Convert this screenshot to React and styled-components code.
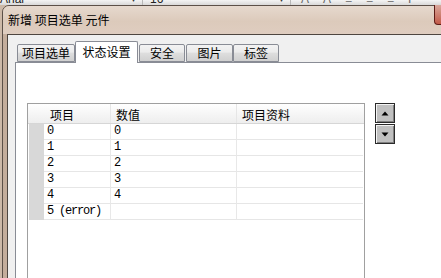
import React from 'react';
import styled, { createGlobalStyle } from 'styled-components';

const Global = createGlobalStyle`
  html, body { margin: 0; padding: 0; overflow: hidden; background: #cdb9a8; }
  body { width: 441px; height: 278px; font-family: "Noto Sans CJK SC", sans-serif; }
  #root { width: 441px; height: 278px; overflow: hidden; }
`;

const Toolbar = styled.div`
  height: 5px;
  flex-shrink: 0;
  overflow: hidden;
  background: linear-gradient(#f4f4f4, #d9d9d9);
  display: flex;
`;

const ToolInner = styled.div`
  display: flex;
  align-items: center;
  height: 12px;
  margin-top: -7px;
  font-family: "Liberation Sans", sans-serif;
  font-size: 12px;
  color: #222;
`;

const Combo = styled.div`
  width: ${p => p.$w}px;
  display: flex;
  align-items: center;
  padding-left: ${p => p.$pl}px;
  border-right: 1px solid #b8b8b8;
  box-sizing: border-box;
  height: 12px;
`;

const ComboText = styled.span`
  flex: 1;
`;

const ComboArrow = styled.span`
  font-size: 7px;
  margin-right: 5px;
  color: #333;
`;

const ToolIcons = styled.div`
  display: flex;
  gap: 14px;
  padding-left: 10px;
  color: #666;
  font-size: 12px;
`;

const Window = styled.div`
  width: 520px;
  height: 400px;
  margin-left: 2px;
  border: 1px solid #5c5048;
  border-radius: 7px 7px 0 0;
  background: linear-gradient(90deg, #c4ad9b, #dac7b9 25%, #d6c1b1 60%, #dcc9bb);
  display: flex;
  flex-direction: column;
`;

const TitleBar = styled.div`
  height: 28px;
  flex-shrink: 0;
  display: flex;
  align-items: flex-start;
  background: linear-gradient(#e6d9ce, #dccabb 55%, #dfcdc0);
  border-radius: 6px 6px 0 0;
`;

const Title = styled.div`
  flex: 0 0 431px;
  padding-left: 5px;
  box-sizing: border-box;
  margin-top: 7px;
  font-size: 12px;
  line-height: 14px;
  color: #000;
  white-space: nowrap;
`;

const CloseBtn = styled.div`
  width: 45px;
  height: 20px;
  margin-top: -1px;
  box-sizing: border-box;
  border: 1px solid #5e1c16;
  border-top: none;
  border-radius: 0 0 4px 4px;
  background: linear-gradient(#d9a89c, #c25a48);
`;

const Client = styled.div`
  flex: 1;
  margin-left: 4px;
  border-left: 1px solid #4e4640;
  border-top: 1px solid #4e4640;
  background: #f0f0f0;
  padding: 6px 0 0 7px;
  display: flex;
  flex-direction: column;
`;

const TabStrip = styled.div`
  height: 21px;
  flex-shrink: 0;
  display: flex;
  align-items: flex-end;
  padding-left: 2px;
`;

const Tab = styled.div`
  position: relative;
  box-sizing: border-box;
  width: ${p => p.$w}px;
  margin-left: ${p => p.$ml || 0}px;
  height: ${p => (p.$active ? 22 : 18)}px;
  margin-bottom: ${p => (p.$active ? -1 : 0)}px;
  z-index: ${p => (p.$active ? 2 : 1)};
  border: 1px solid #898c95;
  border-bottom: ${p => (p.$active ? 'none' : '1px solid #898c95')};
  border-radius: 2px 2px 0 0;
  background: ${p =>
    p.$active
      ? '#ffffff'
      : 'linear-gradient(#f3f3f3, #ebebeb 45%, #dedede 50%, #d0d0d0)'};
  font-size: 12px;
  line-height: 14px;
  color: #000;
  display: flex;
  align-items: center;
  justify-content: center;
  padding-bottom: ${p => (p.$active ? 2 : 0)}px;
`;

const Panel = styled.div`
  flex: 1;
  background: #ffffff;
  border: 1px solid #898c95;
  border-right: none;
  padding: 40px 0 0 11px;
  display: flex;
  align-items: flex-start;
`;

const Grid = styled.div`
  width: 338px;
  height: 240px;
  flex-shrink: 0;
  box-sizing: border-box;
  border: 1px solid #a0a0a0;
  border-bottom: none;
  background: #fff;
  display: flex;
  flex-direction: column;
`;

const HeaderRow = styled.div`
  display: flex;
  height: 20px;
  flex-shrink: 0;
  box-sizing: border-box;
  background: linear-gradient(#ffffff, #f6f6f6 50%, #eeeeee);
  border-bottom: 1px solid #d6d6d6;
`;

const HeadSpacer = styled.div`
  width: 16px;
`;

const HeadCell = styled.div`
  width: ${p => p.$w}px;
  box-sizing: border-box;
  padding: 4px 0 0 ${p => p.$pl}px;
  border-right: ${p => (p.$last ? 'none' : '1px solid #e6e6e6')};
  font-size: 12px;
  line-height: 14px;
  color: #000;
`;

const Row = styled.div`
  display: flex;
  height: 16px;
  flex-shrink: 0;
`;

const RowHead = styled.div`
  width: 15px;
  margin-left: 1px;
  background: #d8d8d8;
`;

const Cell = styled.div`
  width: ${p => p.$w}px;
  box-sizing: border-box;
  padding-left: 3px;
  border-bottom: 1px solid #e6e6e6;
  border-right: ${p => (p.$last ? 'none' : '1px solid #e8e8e8')};
  font-family: "Liberation Mono", monospace;
  font-size: 12px;
  letter-spacing: -1.2px;
  line-height: 15px;
  color: #000;
  white-space: nowrap;
`;

const Buttons = styled.div`
  margin-left: 10px;
  display: flex;
  flex-direction: column;
  gap: 1px;
`;

const ArrowBtn = styled.div`
  width: 20px;
  height: 20px;
  box-sizing: border-box;
  border: 1px solid #2a2a2a;
  background: #c0c0c0;
  box-shadow: inset 1px 1px 0 #f4f4f4, inset -1px -1px 0 #808080;
  display: flex;
  align-items: center;
  justify-content: center;
`;

const rows = [
  ['0', '0'],
  ['1', '1'],
  ['2', '2'],
  ['3', '3'],
  ['4', '4'],
  ['5 (error)', ''],
];

const tabs = [
  { label: '项目选单', w: 58 },
  { label: '状态设置', w: 63, active: true },
  { label: '安全', w: 46, ml: 1 },
  { label: '图片', w: 47, ml: 1 },
  { label: '标签', w: 46 },
];

export default function App() {
  return (
    <>
      <Global />
      <Toolbar>
        <ToolInner>
          <Combo $w={143} $pl={0}>
            <ComboText>Arial</ComboText>
            <ComboArrow>▼</ComboArrow>
          </Combo>
          <Combo $w={148} $pl={7}>
            <ComboText>16</ComboText>
            <ComboArrow>▼</ComboArrow>
          </Combo>
          <ToolIcons>
            <span>A</span>
            <span>A</span>
            <span>≡</span>
            <span>≡</span>
            <span>≡</span>
            <span>I</span>
          </ToolIcons>
        </ToolInner>
      </Toolbar>
      <Window>
        <TitleBar>
          <Title>新增 项目选单 元件</Title>
          <CloseBtn />
        </TitleBar>
        <Client>
          <TabStrip>
            {tabs.map(t => (
              <Tab key={t.label} $w={t.w} $ml={t.ml} $active={t.active}>
                {t.label}
              </Tab>
            ))}
          </TabStrip>
          <Panel>
            <Grid>
              <HeaderRow>
                <HeadSpacer />
                <HeadCell $w={67} $pl={6}>项目</HeadCell>
                <HeadCell $w={126} $pl={5}>数值</HeadCell>
                <HeadCell $w={126} $pl={5} $last>项目资料</HeadCell>
              </HeaderRow>
              {rows.map((r, i) => (
                <Row key={i}>
                  <RowHead />
                  <Cell $w={67}>{r[0]}</Cell>
                  <Cell $w={126}>{r[1]}</Cell>
                  <Cell $w={126} $last />
                </Row>
              ))}
            </Grid>
            <Buttons>
              <ArrowBtn>
                <svg width="8" height="5" viewBox="0 0 8 5">
                  <polygon points="4,0.5 7.5,4.5 0.5,4.5" fill="#000" />
                </svg>
              </ArrowBtn>
              <ArrowBtn>
                <svg width="8" height="5" viewBox="0 0 8 5">
                  <polygon points="0.5,0.5 7.5,0.5 4,4.5" fill="#000" />
                </svg>
              </ArrowBtn>
            </Buttons>
          </Panel>
        </Client>
      </Window>
    </>
  );
}
